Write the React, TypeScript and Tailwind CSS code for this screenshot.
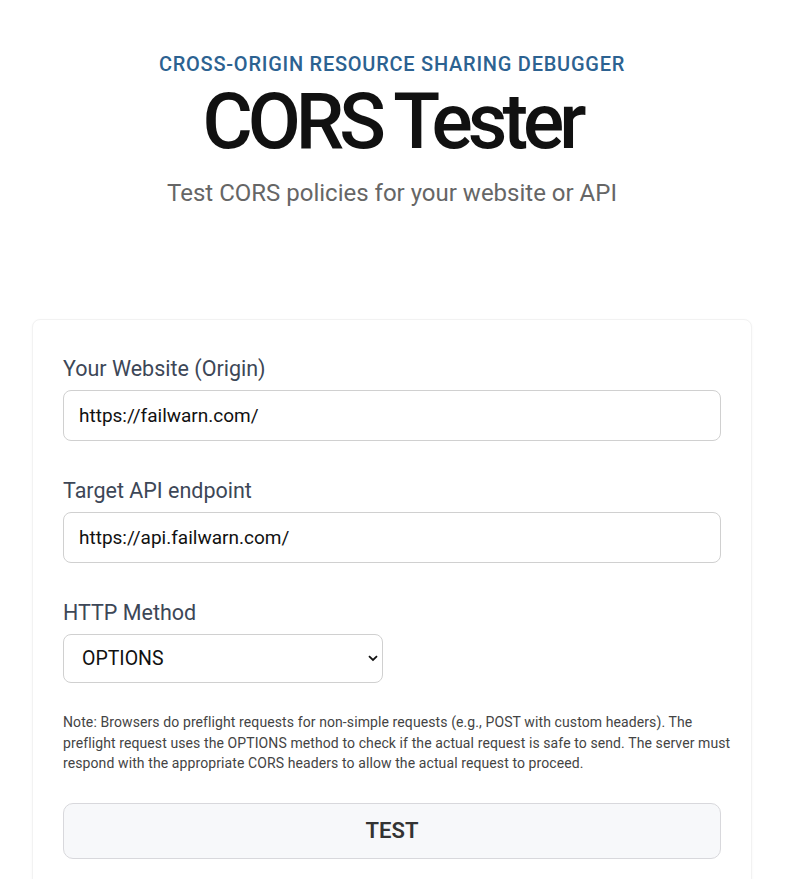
import React from "react";

export default function App() {
  return (
    <div className="min-h-screen bg-white text-[#111]" style={{ fontFamily: "Roboto, 'Noto Sans', sans-serif" }}>
      <header className="flex flex-col items-center pt-[50px] w-[784px]">
        <div className="text-[20px] leading-[28px] font-medium tracking-[0.75px] text-[#2c6291]">
          CROSS-ORIGIN RESOURCE SHARING DEBUGGER
        </div>
        <h1 className="mt-[4px] text-[77px] leading-[80px] font-medium tracking-[-5px] text-[#111]">CORS Tester</h1>
        <p className="mt-[15px] text-[24px] leading-[32px] text-[#666]">Test CORS policies for your website or API</p>
      </header>

      <div className="ml-[32px] mt-[110px] w-[720px] rounded-[8px] border border-[#f2f2f2] bg-white px-[30px] pt-[35px] pb-[40px] shadow-[0_1px_3px_rgba(0,0,0,0.04)]">
        <label className="block text-[21.5px] leading-[28px] text-[#3d4757]">Your Website (Origin)</label>
        <input
          readOnly
          value="https://failwarn.com/"
          className="mt-[7px] block h-[51px] w-full rounded-[8px] border border-[#d0d0d0] bg-white px-[15px] text-[19px] text-[#111] outline-none"
        />

        <label className="mt-[36px] block text-[21.5px] leading-[28px] text-[#3d4757]">Target API endpoint</label>
        <input
          readOnly
          value="https://api.failwarn.com/"
          className="mt-[7px] block h-[51px] w-full rounded-[8px] border border-[#d0d0d0] bg-white px-[15px] text-[19px] text-[#111] outline-none"
        />

        <label className="mt-[36px] block text-[21.5px] leading-[28px] text-[#3d4757]">HTTP Method</label>
        <div className="relative mt-[7px] w-[320px]">
          <select
            defaultValue="OPTIONS"
            className="block h-[49px] w-full appearance-none rounded-[8px] border border-[#d0d0d0] bg-white px-[18px] text-[19.5px] text-[#111] outline-none"
          >
            <option>GET</option>
            <option>POST</option>
            <option>PUT</option>
            <option>DELETE</option>
            <option>OPTIONS</option>
          </select>
          <svg className="pointer-events-none absolute right-[5px] top-[21px]" width="10" height="7" viewBox="0 0 10 7">
            <path d="M1 1.2 L5 5 L9 1.2" fill="none" stroke="#111" strokeWidth="1.8" />
          </svg>
        </div>

        <p className="mt-[29px] text-[14px] leading-[20.5px] tracking-[0.1px] text-[#444]">
          <span className="block whitespace-nowrap">Note: Browsers do preflight requests for non-simple requests (e.g., POST with custom headers). The</span>
          <span className="block whitespace-nowrap">preflight request uses the OPTIONS method to check if the actual request is safe to send. The server must</span>
          <span className="block whitespace-nowrap">respond with the appropriate CORS headers to allow the actual request to proceed.</span>
        </p>

        <button className="mt-[29px] flex h-[56px] w-full items-center justify-center rounded-[10px] border border-[#d8d8dc] bg-[#f7f8fa] text-[22px] font-semibold text-[#333]">
          TEST
        </button>
      </div>
    </div>
  );
}
